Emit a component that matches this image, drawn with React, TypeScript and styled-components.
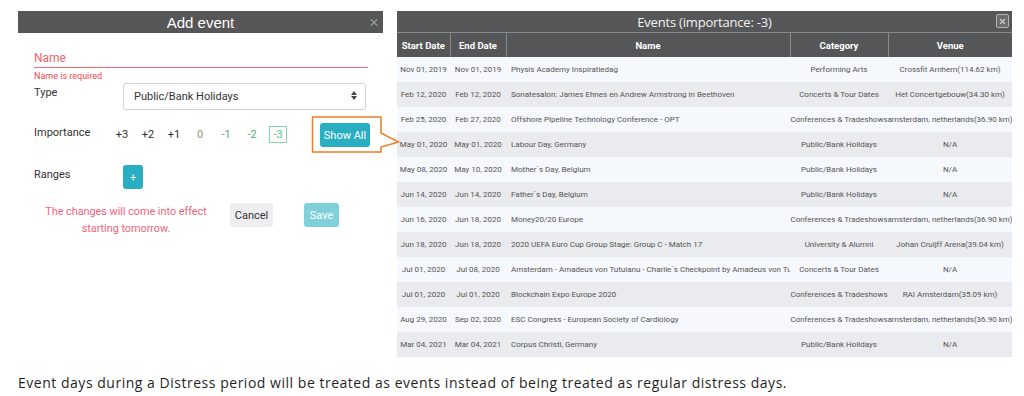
import React from 'react';
import styled, { createGlobalStyle } from 'styled-components';

const GlobalStyle = createGlobalStyle`
  html, body {
    margin: 0;
    padding: 0;
    background: #fff;
  }
  body {
    font-family: Roboto, "Liberation Sans", sans-serif;
  }
`;

const Page = styled.div`
  width: 1024px;
  height: 396px;
  padding: 11px 12px 0 18px;
  box-sizing: border-box;
  overflow: hidden;
`;

const TopRow = styled.div`
  display: flex;
  align-items: flex-start;
  gap: 14px;
`;

/* ---------- left: add event form ---------- */

const FormPanel = styled.div`
  width: 365px;
  flex: none;
`;

const TitleBar = styled.div<{ $height: number }>`
  position: relative;
  height: ${p => p.$height}px;
  background: #555657;
  color: #fff;
  display: flex;
  align-items: center;
  justify-content: center;
`;

const FormTitle = styled.span`
  font-family: "Liberation Sans", Arial, sans-serif;
  font-size: 15px;
`;

const CloseX = styled.span`
  position: absolute;
  right: 4px;
  top: 2px;
  color: #9a9a9a;
  font-family: "Liberation Sans", Arial, sans-serif;
  font-size: 17px;
  line-height: 20px;
`;

const FormBody = styled.div`
  padding: 0 15px 0 16px;
`;

const NameField = styled.div`
  margin-top: 16px;
  height: 18px;
  border-bottom: 1px solid #f26a72;
  color: #f2636c;
  font-size: 12px;
  line-height: 18px;
`;

const ErrorText = styled.div`
  margin-top: 3px;
  color: #f0444f;
  font-size: 9px;
  line-height: 11px;
`;

const FieldRow = styled.div<{ $top: number }>`
  display: flex;
  align-items: flex-start;
  margin-top: ${p => p.$top}px;
`;

const Label = styled.div`
  width: 89px;
  flex: none;
  padding-top: 2px;
  font-size: 11px;
  line-height: 15px;
  color: #333;
`;

const Select = styled.div`
  position: relative;
  width: 243px;
  height: 27px;
  box-sizing: border-box;
  border: 1px solid #cfd3d7;
  border-radius: 3px;
  padding-left: 10px;
  display: flex;
  align-items: center;
  font-size: 11px;
  color: #333;
`;

const Caret = styled.span`
  position: absolute;
  right: 8px;
  top: 7px;
  display: flex;
  flex-direction: column;
  gap: 1px;
`;

const Levels = styled.div`
  display: flex;
  gap: 8px;
  margin-left: -10px;
  margin-top: 3px;
`;

const Level = styled.div<{ $color: string; $active?: boolean }>`
  width: 18px;
  height: 17px;
  box-sizing: border-box;
  display: flex;
  align-items: center;
  justify-content: center;
  font-size: 11px;
  color: ${p => p.$color};
  border: 1px solid ${p => (p.$active ? '#86d6ab' : 'transparent')};
`;

const CalloutWrap = styled.div`
  position: relative;
  margin-left: 33px;
`;

const Callout = styled.svg`
  position: absolute;
  left: -9px;
  top: -8px;
  overflow: visible;
  z-index: 5;
  pointer-events: none;
`;

const Button = styled.button<{ $bg: string; $fg: string; $w: number }>`
  width: ${p => p.$w}px;
  height: 24px;
  padding: 0;
  border: none;
  border-radius: 3px;
  background: ${p => p.$bg};
  color: ${p => p.$fg};
  font-family: Roboto, sans-serif;
  font-size: 11px;
  display: flex;
  align-items: center;
  justify-content: center;
`;

const Footer = styled.div`
  display: flex;
  align-items: flex-start;
  margin-top: 14px;
`;

const Notice = styled.div`
  width: 184px;
  flex: none;
  text-align: center;
  color: #f2637a;
  font-size: 10.8px;
  line-height: 17px;
`;

const FooterButtons = styled.div`
  display: flex;
  gap: 31px;
  margin-left: 12px;
`;

/* ---------- right: events table ---------- */

const TablePanel = styled.div`
  width: 615px;
  flex: none;
`;

const TableTitle = styled.span`
  font-family: "Open Sans", sans-serif;
  font-size: 13px;
  letter-spacing: -0.2px;
  color: #f2f2f2;
`;

const BoxClose = styled.span`
  position: absolute;
  right: 3px;
  top: 3px;
  width: 13px;
  height: 14px;
  box-sizing: border-box;
  border: 1px solid #b5b5b5;
  border-radius: 2px;
  background: #6a6a6a;
  display: flex;
  align-items: center;
  justify-content: center;
`;

const Table = styled.table`
  width: 615px;
  border-collapse: collapse;
  table-layout: fixed;
  font-family: Roboto, sans-serif;
`;

const HeadCell = styled.th`
  height: 24px;
  padding: 0;
  background: #555657;
  color: #fff;
  font-size: 9.5px;
  font-weight: bold;
  border-left: 1px solid #8a8a8a;
  border-top: 1px solid #8a8a8a;
  &:first-child {
    border-left: none;
  }
`;

const Row = styled.tr<{ $even: boolean }>`
  height: 25px;
  background: ${p => (p.$even ? '#e9ebee' : '#f5f8fc')};
`;

const Cell = styled.td`
  padding: 0;
  font-size: 8px;
  color: #555;
`;

const CellBox = styled.div<{ $left?: boolean }>`
  display: flex;
  justify-content: ${p => (p.$left ? 'flex-start' : 'center')};
  padding-left: ${p => (p.$left ? '5px' : '0')};
  white-space: nowrap;
  overflow: hidden;
`;

const Note = styled.p`
  margin: 17px 0 0;
  font-family: "Open Sans", sans-serif;
  font-size: 14px;
  letter-spacing: 0.52px;
  line-height: 17px;
  color: #1f1f1f;
`;

const levels = [
  { v: '+3', c: '#2f2f2f' },
  { v: '+2', c: '#2f2f2f' },
  { v: '+1', c: '#2f2f2f' },
  { v: '0', c: '#8c9a6e' },
  { v: '-1', c: '#5aa88c' },
  { v: '-2', c: '#4fb072' },
  { v: '-3', c: '#5cbf8a', active: true },
];

const columns = [
  { title: 'Start Date', w: 53 },
  { title: 'End Date', w: 56 },
  { title: 'Name', w: 284 },
  { title: 'Category', w: 98 },
  { title: 'Venue', w: 124 },
];

const amsterdam = 'amsterdam, netherlands(36.90 km)';
const conf = 'Conferences & Tradeshows';
const holiday = 'Public/Bank Holidays';

const events = [
  ['Nov 01, 2019', 'Nov 01, 2019', 'Physis Academy Inspiratiedag', 'Performing Arts', 'Crossfit Arnhem(114.62 km)'],
  ['Feb 12, 2020', 'Feb 12, 2020', 'Sonatesalon: James Ehnes en Andrew Armstrong in Beethoven', 'Concerts & Tour Dates', 'Het Concertgebouw(34.30 km)'],
  ['Feb 25, 2020', 'Feb 27, 2020', 'Offshore Pipeline Technology Conference - OPT', conf, amsterdam],
  ['May 01, 2020', 'May 01, 2020', 'Labour Day, Germany', holiday, 'N/A'],
  ['May 08, 2020', 'May 10, 2020', 'Mother`s Day, Belgium', holiday, 'N/A'],
  ['Jun 14, 2020', 'Jun 14, 2020', 'Father`s Day, Belgium', holiday, 'N/A'],
  ['Jun 16, 2020', 'Jun 18, 2020', 'Money20/20 Europe', conf, amsterdam],
  ['Jun 18, 2020', 'Jun 18, 2020', '2020 UEFA Euro Cup Group Stage: Group C - Match 17', 'University & Alumni', 'Johan Cruijff Arena(39.04 km)'],
  ['Jul 01, 2020', 'Jul 08, 2020', 'Amsterdam - Amadeus von Tutuianu - Charlie`s Checkpoint by Amadeus von Tutuianu', 'Concerts & Tour Dates', 'N/A'],
  ['Jul 01, 2020', 'Jul 01, 2020', 'Blockchain Expo Europe 2020', conf, 'RAI Amsterdam(35.09 km)'],
  ['Aug 29, 2020', 'Sep 02, 2020', 'ESC Congress - European Society of Cardiology', conf, amsterdam],
  ['Mar 04, 2021', 'Mar 04, 2021', 'Corpus Christi, Germany', holiday, 'N/A'],
];

const App: React.FC = () => {
  return (
    <Page>
      <GlobalStyle />
      <TopRow>
        <FormPanel>
          <TitleBar $height={22}>
            <FormTitle>Add event</FormTitle>
            <CloseX>×</CloseX>
          </TitleBar>
          <FormBody>
            <NameField>Name</NameField>
            <ErrorText>Name is required</ErrorText>
            <FieldRow $top={1}>
              <Label>Type</Label>
              <Select>
                Public/Bank Holidays
                <Caret>
                  <svg width="6" height="4" viewBox="0 0 6 4"><path d="M0 4 L3 0 L6 4 Z" fill="#444" /></svg>
                  <svg width="6" height="4" viewBox="0 0 6 4"><path d="M0 0 L3 4 L6 0 Z" fill="#444" /></svg>
                </Caret>
              </Select>
            </FieldRow>
            <FieldRow $top={13}>
              <Label>Importance</Label>
              <Levels>
                {levels.map(l => (
                  <Level key={l.v} $color={l.c} $active={l.active}>{l.v}</Level>
                ))}
              </Levels>
              <CalloutWrap>
                <Button $bg="#2aaec1" $fg="#fff" $w={50}>Show All</Button>
                <Callout width="90" height="40" viewBox="0 0 90 40">
                  <path d="M1.5 2 H70 V18 L87.5 27 L70 32 V37 H1.5 Z" fill="none" stroke="#ea7f28" strokeWidth="1.5" />
                </Callout>
              </CalloutWrap>
            </FieldRow>
            <FieldRow $top={18}>
              <Label>Ranges</Label>
              <Button $bg="#2aaec1" $fg="#fff" $w={20}>+</Button>
            </FieldRow>
            <Footer>
              <Notice>The changes will come into effect<br />starting tomorrow.</Notice>
              <FooterButtons>
                <Button $bg="#eceef0" $fg="#333" $w={43}>Cancel</Button>
                <Button $bg="#80d0dc" $fg="#fff" $w={35}>Save</Button>
              </FooterButtons>
            </Footer>
          </FormBody>
        </FormPanel>

        <TablePanel>
          <TitleBar $height={21}>
            <TableTitle>Events (importance: -3)</TableTitle>
            <BoxClose>
              <svg width="7" height="7" viewBox="0 0 7 7">
                <path d="M1 1 L6 6 M6 1 L1 6" stroke="#c8c8c8" strokeWidth="1.4" />
              </svg>
            </BoxClose>
          </TitleBar>
          <Table>
            <colgroup>
              {columns.map(c => <col key={c.title} style={{ width: c.w }} />)}
            </colgroup>
            <thead>
              <tr>
                {columns.map(c => (
                  <HeadCell key={c.title}>
                    <CellBox>{c.title}</CellBox>
                  </HeadCell>
                ))}
              </tr>
            </thead>
            <tbody>
              {events.map((e, i) => (
                <Row key={i} $even={i % 2 === 1}>
                  {e.map((text, j) => (
                    <Cell key={j}>
                      <CellBox $left={j === 2}>{text}</CellBox>
                    </Cell>
                  ))}
                </Row>
              ))}
            </tbody>
          </Table>
        </TablePanel>
      </TopRow>
      <Note>
        Event days during a Distress period will be treated as events instead of being treated as regular distress days.
      </Note>
    </Page>
  );
};

export default App;
